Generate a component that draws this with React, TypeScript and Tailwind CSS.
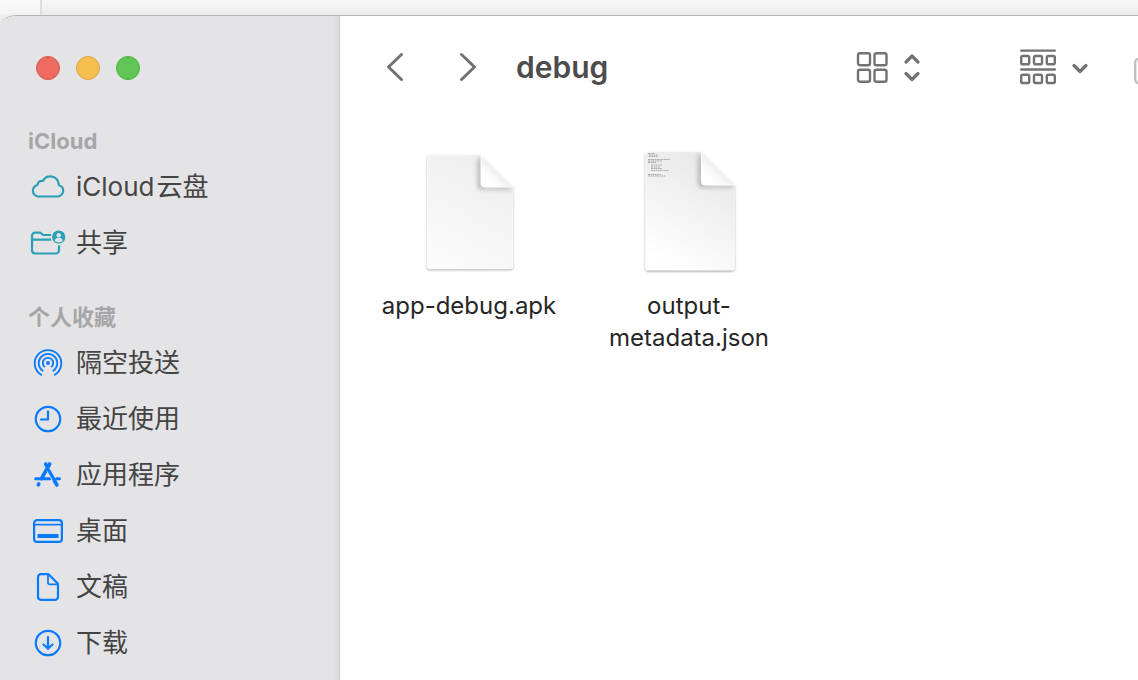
import type { ReactNode } from "react";

const teal = "#2a9fb8";
const blue = "#0a7aff";

function Icon({ children, color = blue }: { children: ReactNode; color?: string }) {
  return (
    <svg
      className="size-9 shrink-0"
      viewBox="0 0 36 36"
      fill="none"
      stroke={color}
      strokeWidth="2.200"
      strokeLinecap="round"
      strokeLinejoin="round"
      aria-hidden="true"
    >
      {children}
    </svg>
  );
}

const CloudIcon = () => (
  <Icon color={teal}>
    <path d="M9.300 27.500h18.200a5.700 5.700 0 0 0 5.700-5.700c0-2.900-1.800-5-4.300-5.600C28.800 10.800 25 7.400 20.500 7.400c-3.500 0-6.300 1.900-7.600 4.600-2.800-.6-5.200 1.200-5.400 4-2.600.8-4.600 2.900-4.600 5.700A5.900 5.900 0 0 0 9.300 27.500Z" />
  </Icon>
);

const SharedIcon = () => (
  <Icon color={teal}>
    <path d="M21 10H13.200l-2.400-2a2 2 0 0 0-1.300-.4H5.300A3.300 3.300 0 0 0 2 10.900v14.400A3.300 3.300 0 0 0 5.300 28.500h20.400a3.300 3.300 0 0 0 3.300-3.300V20.200" strokeLinecap="butt" />
    <path d="M2 14.600h19" strokeLinecap="butt" />
    <circle cx="28.700" cy="12" r="6.600" fill={teal} stroke="none" />
    <circle cx="28.700" cy="10.200" r="2.200" fill="#e4e4e6" stroke="none" />
    <path d="M24.700 16c.2-2.200 1.800-3.200 4-3.200s3.800 1 4 3.200c-2 1.700-6 1.700-8 0Z" fill="#e4e4e6" stroke="none" />
  </Icon>
);

const AirDropIcon = () => (
  <Icon>
    <circle cx="18" cy="18" r="2" fill={blue} stroke="none" />
    <g strokeLinecap="butt" strokeWidth="1.800">
      <path d="M14.800 22.100a5.200 5.200 0 1 1 6.400 0" />
      <path d="M13.200 26.100a9.300 9.300 0 1 1 9.600 0" />
      <path d="M11.800 30.100a13.300 13.300 0 1 1 12.400 0" />
    </g>
  </Icon>
);

const ClockIcon = () => (
  <Icon>
    <circle cx="18" cy="18" r="12.200" />
    <path d="M18 10.500V18.500h-7" />
  </Icon>
);

const AppsIcon = () => (
  <Icon>
    <g strokeWidth="3.600">
      <path d="M19.700 7 13 18.800" />
      <path d="M15.700 7l2 3.500" />
      <path d="M18.900 14 26.900 28" />
      <path d="M5.700 21.800h14" strokeWidth="3" />
      <path d="M26.500 21.800h3" strokeWidth="3" />
      <path d="M8.800 27l-.5.800" />
      <path d="M13.300 18.400l-1.800 3.200" />
    </g>
    <path d="M17.200 14.600l5 8.700" stroke="#e4e4e6" strokeWidth="0.900" />
  </Icon>
);

const DesktopIcon = () => (
  <Icon>
    <rect x="4.100" y="7.100" width="27.800" height="21.800" rx="3" />
    <path d="M4 11.700h28" strokeWidth="1.800" />
    <path d="M9.500 23h17" strokeWidth="4" strokeLinecap="square" strokeLinejoin="miter" />
  </Icon>
);

const DocumentIcon = () => (
  <Icon>
    <path d="M8 8.200a3 3 0 0 1 3-3h6.500a2 2 0 0 1 1.500.6l8.500 8.500a2 2 0 0 1 .5 1.400v12.100a3 3 0 0 1-3 3H11a3 3 0 0 1-3-3Z" />
    <path d="M18 5.500v8.300a1.500 1.500 0 0 0 1.500 1.500H27.500" strokeWidth="1.800" />
  </Icon>
);

const DownloadIcon = () => (
  <Icon>
    <circle cx="18" cy="18" r="12.200" />
    <path d="M18 12v11.500M13.500 19.500l4.500 4.300 4.500-4.300" />
  </Icon>
);

function Section({ title, children }: { title: string; children: ReactNode }) {
  return (
    <section>
      <h2 className="pb-[3px] pl-7 text-[22px] leading-[30px] font-bold text-[#a6a6a8]">{title}</h2>
      <ul>{children}</ul>
    </section>
  );
}

function Item({ icon, children }: { icon: ReactNode; children: ReactNode }) {
  return (
    <li>
      <a href="#" className="flex h-14 items-center gap-2.5 pl-[30px] text-[26px] leading-9 text-[#444444]">
        {icon}
        <span className="flex gap-0.5">{children}</span>
      </a>
    </li>
  );
}

const pagePath = "M25 7h51l32 32v79a3 3 0 0 1-3 3H25a3 3 0 0 1-3-3V10a3 3 0 0 1 3-3Z";

function FileArt({ id, preview }: { id: string; preview?: boolean }) {
  return (
    <svg className="size-32" viewBox="0 0 128 128" aria-hidden="true">
      <defs>
        <linearGradient id={id + "-page"} x1="0.750" y1="0.100" x2="0.350" y2="1">
          <stop offset="0" stopColor={preview ? "#e8e8e8" : "#eeeeee"} />
          <stop offset="1" stopColor={preview ? "#ffffff" : "#fbfbfb"} />
        </linearGradient>
        <linearGradient id={id + "-fold"} x1="0.650" y1="0.350" x2="0.050" y2="0.950">
          <stop offset="0" stopColor="#e6e6e6" />
          <stop offset="0.700" stopColor="#ffffff" />
        </linearGradient>
        <filter id={id + "-soft"} x="-20%" y="-20%" width="140%" height="140%">
          <feGaussianBlur stdDeviation="1.200" />
        </filter>
        <filter id={id + "-shade"} x="-50%" y="-50%" width="200%" height="200%">
          <feGaussianBlur stdDeviation="2.600" />
        </filter>
        <clipPath id={id + "-clip"}>
          <path d={pagePath} />
        </clipPath>
      </defs>
      <g transform={preview ? "translate(-2.600 -3.500) scale(1.040)" : undefined}>
        <path d={pagePath} transform="translate(0 1)" fill="#000" opacity="0.400" filter={`url(#${id}-soft)`} />
        <path d={pagePath} fill={`url(#${id}-page)`} stroke="#fff" strokeOpacity="0.600" />
        <g clipPath={`url(#${id}-clip)`}>
          <path d="M76 10v26a3 3 0 0 0 3 3h27v1.500H77a3 3 0 0 1-3-3V10Z" fill="#000" opacity="0.550" filter={`url(#${id}-shade)`} />
        </g>
        <path d="M76 7l32 32H79a3 3 0 0 1-3-3Z" fill={`url(#${id}-fold)`} stroke="#fff" strokeWidth="0.800" />
      </g>
      {preview && (
        <g stroke="#8a8a8a" strokeWidth="0.700" strokeDasharray="2 0.600 1.300 0.500">
          <path d="M23 5.500h7M24 7h9M24 8.500h9M23 11.500h22M23 13h14M23 14.500h8M26 17h11M26 19h9M26 20.500h11M26 22.500h18M23 26.500h13M23 28h18" />
        </g>
      )}
    </svg>
  );
}

function FileItem({ id, name, preview }: { id: string; name: ReactNode; preview?: boolean }) {
  return (
    <li className="w-[220px]">
      <button type="button" className="flex w-full flex-col items-center gap-3.5">
        <FileArt id={id} preview={preview} />
        <span className="text-center text-2xl leading-8 text-[#262626]">{name}</span>
      </button>
    </li>
  );
}

export default function App() {
  return (
    <div className="flex h-screen flex-col overflow-hidden bg-[#eeeeee] font-['Inter','Noto_Sans_CJK_SC',sans-serif]">
      <div className="flex h-[15px] shrink-0 bg-linear-to-b from-[#f7f7f7] to-[#ebebeb]">
        <div className="w-[42px] border-r-2 border-[#dcdce2] bg-white/40" />
      </div>
      <div className="flex min-h-0 flex-1 overflow-hidden rounded-tl-[18px_10px] border-t border-[#b4b4b4] bg-white">
        <aside className="w-[340px] shrink-0 border-r border-[#c8c8ca] bg-[#e4e4e6] bg-linear-to-l from-[#dadadc] to-[#e4e4e6] to-[6px]">
          <div className="flex gap-4 px-9 pt-10">
            <button type="button" aria-label="关闭" className="size-6 rounded-full border border-[#d65549] bg-[#ed6b60]" />
            <button type="button" aria-label="最小化" className="size-6 rounded-full border border-[#dba641] bg-[#f5bf50]" />
            <button type="button" aria-label="缩放" className="size-6 rounded-full border border-[#4fab41] bg-[#62c655]" />
          </div>
          <nav className="flex flex-col gap-[31px] pt-[46px]">
            <Section title="iCloud">
              <Item icon={<CloudIcon />}>
                <span>iCloud</span>
                <span>云盘</span>
              </Item>
              <Item icon={<SharedIcon />}>共享</Item>
            </Section>
            <Section title="个人收藏">
              <Item icon={<AirDropIcon />}>隔空投送</Item>
              <Item icon={<ClockIcon />}>最近使用</Item>
              <Item icon={<AppsIcon />}>应用程序</Item>
              <Item icon={<DesktopIcon />}>桌面</Item>
              <Item icon={<DocumentIcon />}>文稿</Item>
              <Item icon={<DownloadIcon />}>下载</Item>
            </Section>
          </nav>
        </aside>
        <main className="min-w-0 flex-1">
          <header className="flex h-[104px] items-center pl-10 text-[#727272]">
            <button type="button" aria-label="后退">
              <svg className="size-8" viewBox="0 0 32 32" fill="none" stroke="currentColor" strokeWidth="3" strokeLinecap="round" strokeLinejoin="round">
                <path d="M21.500 2.500 8.500 15l13 12.500" />
              </svg>
            </button>
            <button type="button" aria-label="前进" className="ml-10">
              <svg className="size-8" viewBox="0 0 32 32" fill="none" stroke="currentColor" strokeWidth="3" strokeLinecap="round" strokeLinejoin="round">
                <path d="M9.500 2.500 22.500 15l-13 12.500" />
              </svg>
            </button>
            <h1 className="ml-8 pb-0.5 text-[30px] leading-9 font-semibold text-[#4c4c4c]">debug</h1>
            <button type="button" aria-label="显示方式" className="mr-24 ml-auto">
              <svg className="h-10 w-[68px]" viewBox="0 0 68 40" fill="none" stroke="currentColor" strokeWidth="2.400">
                <rect x="2" y="5.300" width="12" height="12" rx="2" />
                <rect x="18.500" y="5.300" width="12" height="12" rx="2" />
                <rect x="2" y="21.800" width="12" height="12" rx="2" />
                <rect x="18.500" y="21.800" width="12" height="12" rx="2" />
                <path d="M50 14l6-6 6 6M50 25.500l6 6 6-6" strokeWidth="3.200" strokeLinecap="round" strokeLinejoin="round" />
              </svg>
            </button>
            <button type="button" aria-label="分组" className="mr-11">
              <svg className="h-10 w-[70px]" viewBox="0 0 70 40" fill="none" stroke="currentColor" strokeWidth="2.400" strokeLinecap="round">
                <path d="M1.200 2.600h33.600M1.200 21.500h33.600" />
                {[1.2, 14, 26.8].map((x) => (
                  <g key={x}>
                    <rect x={x} y="8" width="8" height="8.300" rx="1.600" />
                    <rect x={x} y="26.700" width="8" height="8.300" rx="1.600" />
                  </g>
                ))}
                <path d="M54 17.500l6 6 6-6" strokeWidth="3.200" strokeLinejoin="round" />
              </svg>
            </button>
            <button type="button" aria-label="共享">
              <svg className="h-10 w-1" viewBox="0 0 4 40" fill="none" stroke="#c0c0c0" strokeWidth="2.400">
                <rect x="1.200" y="10.700" width="20" height="24.600" rx="4" />
              </svg>
            </button>
          </header>
          <ul className="flex flex-wrap items-start pt-7 pl-[19px]">
            <FileItem id="apk" name="app-debug.apk" />
            <FileItem
              id="json"
              preview
              name={
                <>
                  output-
                  <br />
                  metadata.json
                </>
              }
            />
          </ul>
        </main>
      </div>
    </div>
  );
}
